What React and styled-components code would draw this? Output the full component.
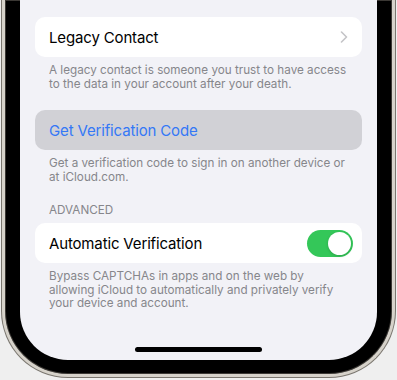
import React from "react";
import styled, { createGlobalStyle } from "styled-components";

const GlobalStyle = createGlobalStyle`
  html, body {
    margin: 0;
    padding: 0;
    background: #efefef;
  }
  * { box-sizing: border-box; }
`;

// whole picture
const Page = styled.div`
  width: 397px;
  height: 380px;
  overflow: hidden;
  padding: 0 2px;
  background: #efefef;
  font-family: "Inter", "Noto Sans", sans-serif;
`;

// steel rim round the black bezel
const Rim = styled.div`
  border: 3px solid #d6d2ca;
  border-top: none;
  border-radius: 0 0 66px 66px;
  box-shadow: 0 0 0 1px #7a766f, inset 0 0 0 1px #3b3834;
  background: #000;
  padding: 0 15px 14px;
`;

const Screen = styled.div`
  height: 360px;
  background: #f2f2f7;
  border-radius: 0 0 48px 48px;
  display: flex;
  flex-direction: column;
  padding: 17px 15px 0;
`;

const Cell = styled.div`
  height: 40px;
  border-radius: 10px;
  background: ${(p) => (p.$pressed ? "#d1d1d6" : "#fff")};
  display: flex;
  align-items: center;
  justify-content: space-between;
  padding: 0 ${(p) => p.$padRight || 14}px 0 14px;
  font-size: 15px;
  letter-spacing: -0.15px;
  color: ${(p) => (p.$link ? "#3478f6" : "#000")};
`;

const Footer = styled.p`
  margin: 7px 0 0;
  padding: 0 14px;
  font-size: 11.7px;
  line-height: 13.5px;
  color: #86868b;
  white-space: nowrap;
`;

const Gap = styled.div`
  height: ${(p) => p.$h}px;
`;

const SectionHeader = styled.div`
  padding: 0 14px;
  font-size: 11.7px;
  line-height: 14px;
  color: #86868b;
  margin-bottom: 6px;
`;

const Toggle = styled.div`
  width: 46px;
  height: 27px;
  border-radius: 14px;
  background: #34c759;
  display: flex;
  align-items: center;
  justify-content: flex-end;
  padding: 2px;
`;

const Knob = styled.div`
  width: 23px;
  height: 23px;
  border-radius: 50%;
  background: #fff;
  box-shadow: 0 1px 3px rgba(0, 0, 0, 0.18);
`;

const HomeBar = styled.div`
  align-self: center;
  width: 127px;
  height: 5px;
  border-radius: 3px;
  background: #000;
  margin: auto 0 8px;
`;

const Chevron = () => (
  <svg width="8" height="12" viewBox="0 0 8 12">
    <path d="M1.5 1 L6.5 6 L1.5 11" fill="none" stroke="#c4c4c7" strokeWidth="1.6" strokeLinecap="round" strokeLinejoin="round" />
  </svg>
);

export default function App() {
  return (
    <Page>
      <GlobalStyle />
      <Rim>
        <Screen>
          <Cell>
            Legacy Contact
            <Chevron />
          </Cell>
          <Footer>
            A legacy contact is someone you trust to have access
            <br />
            to the data in your account after your death.
          </Footer>
          <Gap $h={19} />
          <Cell $pressed $link>Get Verification Code</Cell>
          <Footer>
            Get a verification code to sign in on another device or
            <br />
            at iCloud.com.
          </Footer>
          <Gap $h={19} />
          <SectionHeader>ADVANCED</SectionHeader>
          <Cell $padRight={9}>
            Automatic Verification
            <Toggle>
              <Knob />
            </Toggle>
          </Cell>
          <Footer>
            Bypass CAPTCHAs in apps and on the web by
            <br />
            allowing iCloud to automatically and privately verify
            <br />
            your device and account.
          </Footer>
          <HomeBar />
        </Screen>
      </Rim>
    </Page>
  );
}
